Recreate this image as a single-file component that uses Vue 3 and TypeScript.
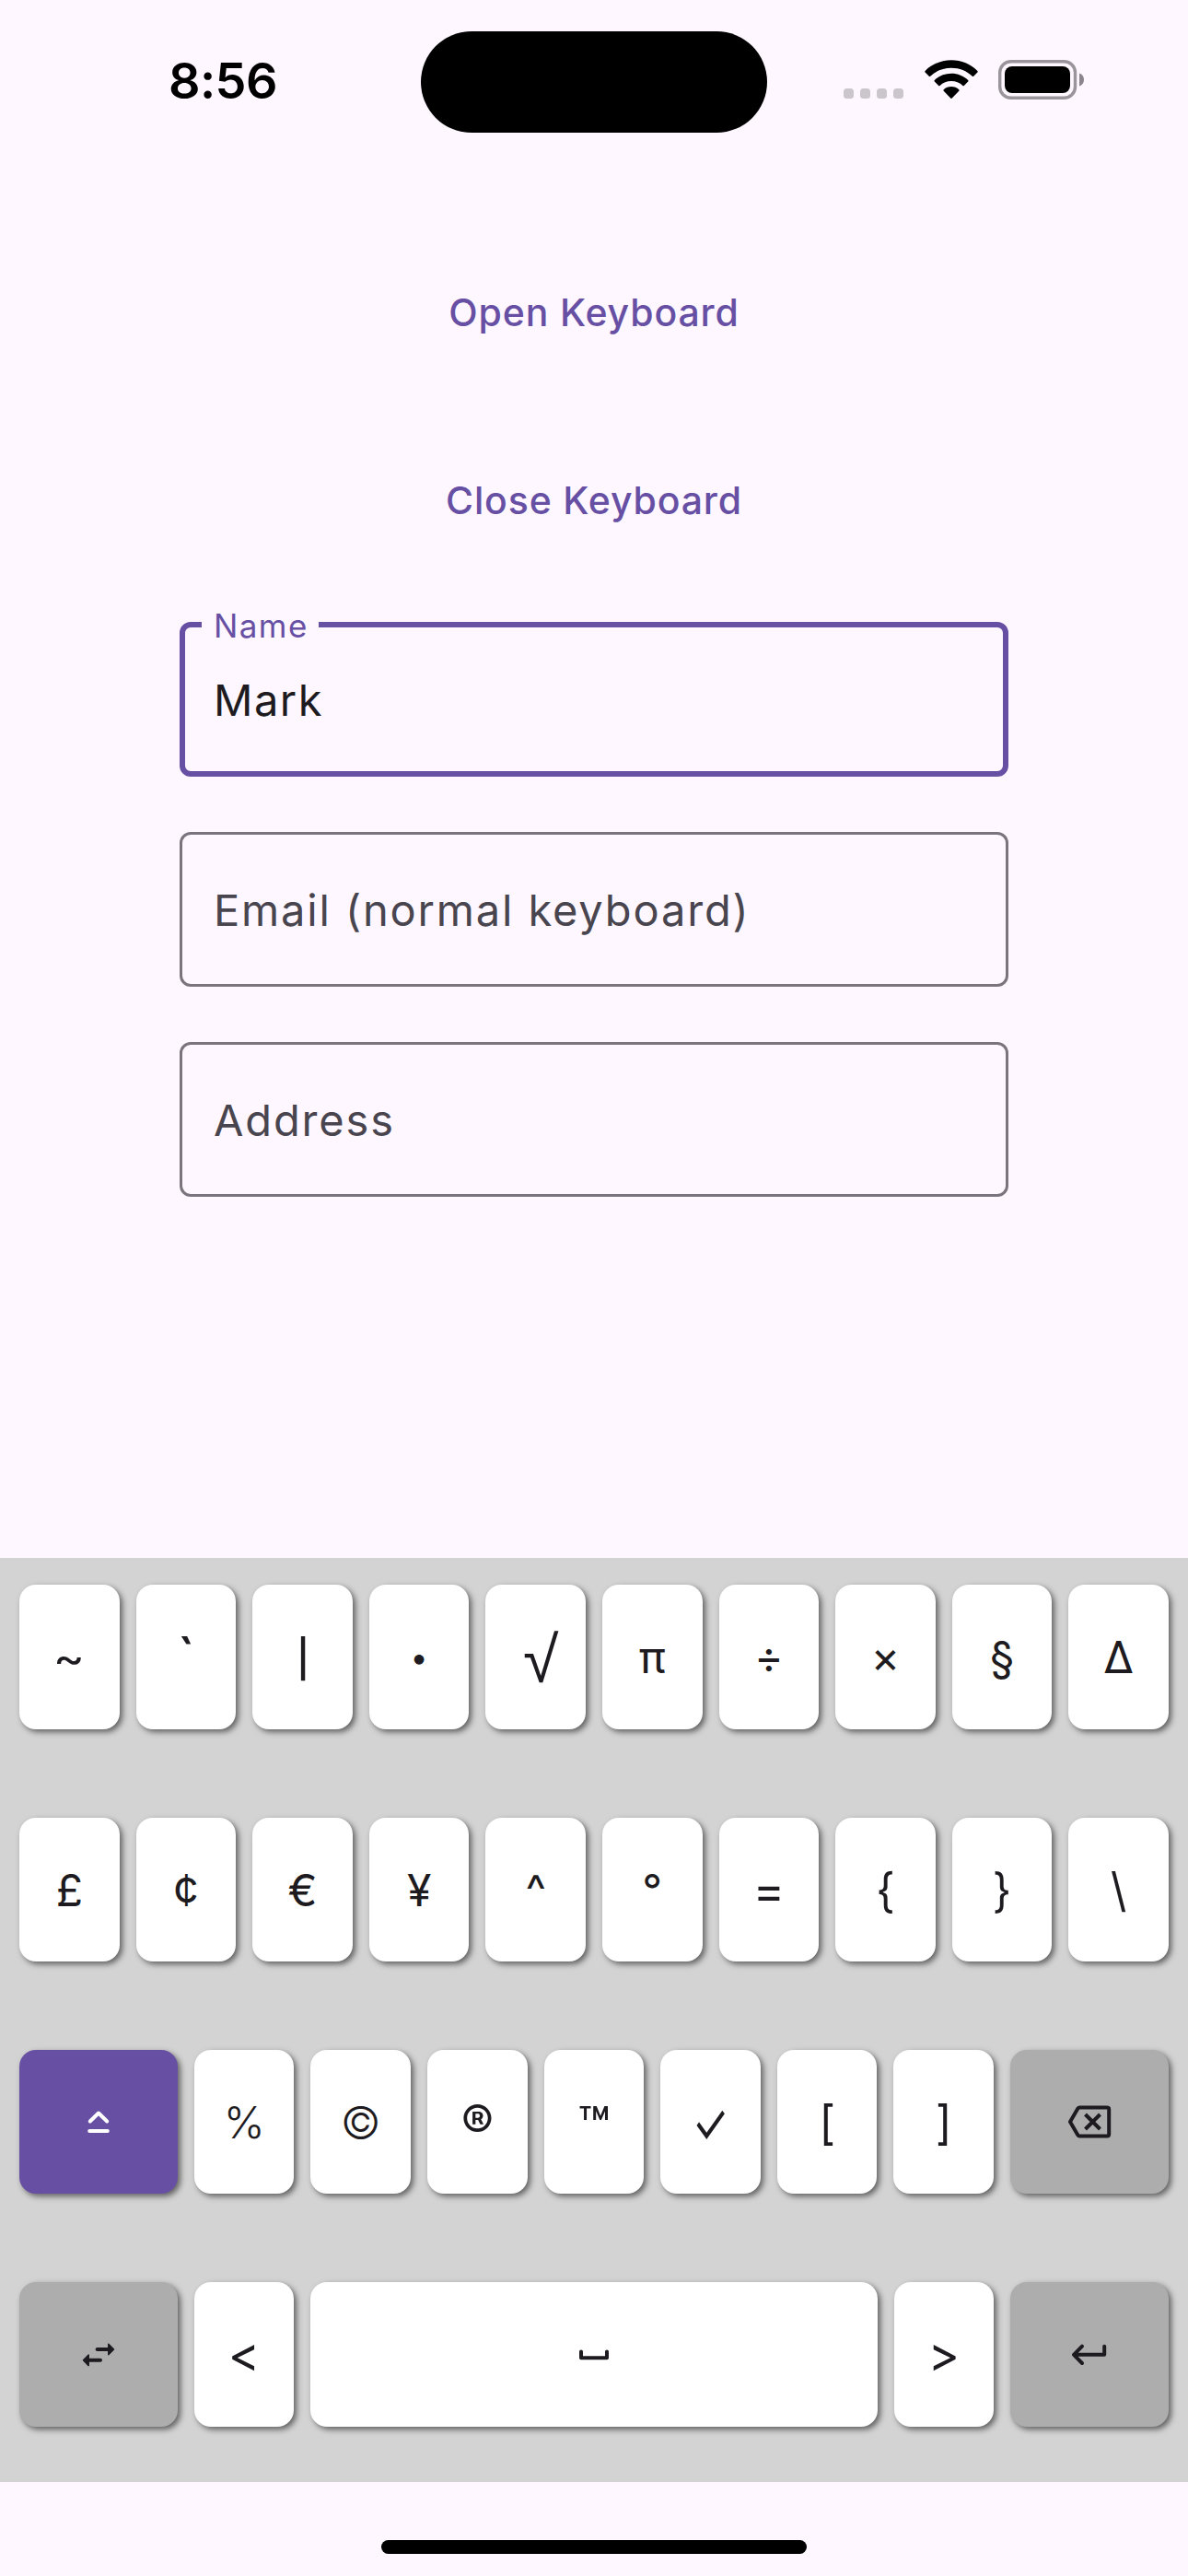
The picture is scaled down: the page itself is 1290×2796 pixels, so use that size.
<script setup lang="ts">
interface Key {
  label?: string
  icon?: 'shift' | 'backspace' | 'swap' | 'space' | 'enter'
  span?: number
  tone?: 'primary' | 'muted'
}

const chars = (list: string): Key[] => list.split(' ').map((label) => ({ label }))

const rows: Key[][] = [
  chars('~ ` | • √ π ÷ × § ∆'),
  chars('£ ¢ € ¥ ^ ° = { } \\'),
  [
    { icon: 'shift', span: 3, tone: 'primary' },
    ...chars('% © ® ™ ✓ [ ]'),
    { icon: 'backspace', span: 3, tone: 'muted' },
  ],
  [
    { icon: 'swap', span: 3, tone: 'muted' },
    { label: '<' },
    { icon: 'space', span: 10 },
    { label: '>' },
    { icon: 'enter', span: 3, tone: 'muted' },
  ],
]

const adjustments: Record<string, string> = {
  '~': 'tilde',
  '`': 'grave',
  '|': 'pipe',
  '•': 'bullet',
  '√': 'root',
  '%': 'light',
  '©': 'copyright',
  '®': 'registered',
  '™': 'trademark',
  '✓': 'check',
  '=': 'equals',
  '{': 'tall',
  '}': 'tall',
  '[': 'tall',
  ']': 'tall',
  '\\': 'tall',
  '<': 'angle',
  '>': 'angle',
}
</script>

<template>
  <div class="screen">
    <header class="status">
      <div class="time">8:56</div>
      <div class="island"></div>
      <div class="indicators">
        <div class="signal"><i></i><i></i><i></i><i></i></div>
        <svg class="wifi" width="58" height="43" viewBox="0 0 58 43">
          <path d="M29 0.2C40 0.2 50 4.6 57.4 11.9c.5.5.5 1.1 0 1.600L53.200 17.700c-.4.4-1 .4-1.400 0C45.800 11.900 37.800 8.700 29 8.700S12.200 11.900 6.200 17.700c-.4.4-1 .4-1.400 0L.6 13.500c-.5-.5-.5-1.100 0-1.600C8 4.600 18 .2 29 .2z" />
          <path d="M29 14.700c7 0 13.400 2.700 18.200 7.200.5.5.5 1.100 0 1.600l-4.400 4.400c-.4.4-1 .4-1.400 0C38.100 24.900 33.800 23 29 23s-9.100 1.900-12.400 4.900c-.4.4-1 .4-1.400 0l-4.400-4.400c-.5-.5-.5-1.100 0-1.600C15.600 17.400 22 14.700 29 14.700z" />
          <path d="M29 29c3.200 0 6.100 1.200 8.300 3.200.5.5.5 1.100 0 1.600l-7.500 7.700c-.5.5-1.100.5-1.600 0l-7.500-7.700c-.5-.5-.5-1.100 0-1.600C22.900 30.200 25.800 29 29 29z" />
        </svg>
        <svg class="battery" width="94" height="43" viewBox="0 0 94 43">
          <rect x="1.700" y="1.700" width="81.800" height="39.600" rx="12" fill="none" stroke="#9a959b" stroke-width="3.400" />
          <rect x="7" y="7" width="71" height="29" rx="8" />
          <path d="M88 14.500c3 .9 5 3.600 5 7s-2 6.100-5 7z" fill="#8b868c" />
        </svg>
      </div>
    </header>

    <main class="content">
      <button class="action">Open Keyboard</button>
      <button class="action">Close Keyboard</button>
      <div class="field active">
        <span class="caption">Name</span>
        <span class="value">Mark</span>
      </div>
      <div class="field">Email (normal keyboard)</div>
      <div class="field">Address</div>
    </main>

    <section class="keyboard">
      <div v-for="(row, r) in rows" :key="r" class="row">
        <div
          v-for="(key, k) in row"
          :key="k"
          class="key"
          :class="key.tone"
          :style="{ gridColumn: `span ${key.span ?? 2}` }"
        >
          <span v-if="key.label" class="glyph" :class="adjustments[key.label]">{{ key.label }}</span>
          <svg v-else class="icon" width="48" height="48" viewBox="0 0 48 48">
            <path v-if="key.icon === 'shift'" d="M14.800 23.500 24 14.500l9.200 9M14.200 33.900h19.600" />
            <template v-else-if="key.icon === 'backspace'">
              <path d="M13.400 8.400H43.200a2 2 0 0 1 2 2V37.600a2 2 0 0 1-2 2H13.400a2.500 2.500 0 0 1-2-1.100L3 24 11.400 9.500a2.500 2.500 0 0 1 2-1.100z" />
              <path class="butt" d="M19.500 16 35.500 32M35.500 16 19.500 32" />
            </template>
            <template v-else-if="key.icon === 'swap'">
              <path d="M22.600 18H36M26 29.800H12" />
              <path class="solid" d="M34.800 12.200v11.600L40.500 18zM13.200 24v11.600L7.500 29.800z" />
            </template>
            <path v-else-if="key.icon === 'space'" d="M10 20.500v6.800h28v-6.800" />
            <path v-else d="M16 14.600 7 23.800 16 33M7 23.800H40.200v-9" />
          </svg>
        </div>
      </div>
    </section>

    <footer class="home"><div class="bar"></div></footer>
  </div>
</template>

<style>
body {
  background: #fef7ff;
}
</style>

<style scoped>
.screen {
  width: 1290px;
  height: 2796px;
  display: flex;
  flex-direction: column;
  overflow: hidden;
  background: #fef7ff;
  font-family: Inter, 'Liberation Sans', sans-serif;
}

.status {
  height: 177px;
  display: grid;
  grid-template-columns: 457px 376px 457px;
  align-items: start;
}

.time {
  padding: 57px 0 0 183px;
  font-size: 54px;
  line-height: 62px;
  font-weight: 600;
  letter-spacing: -0.6px;
}

.island {
  height: 110.600px;
  margin-top: 33.600px;
  border-radius: 56px;
  background: #000;
}

.indicators {
  display: flex;
  align-items: flex-start;
  padding: 65px 0 0 83px;
}

.signal {
  display: flex;
  gap: 7px;
  padding-top: 31px;
  width: 87.500px;
}

.signal i {
  width: 11px;
  height: 11px;
  border-radius: 3.500px;
  background: #cbc6cc;
}

.battery {
  margin-left: 22.500px;
}

.content {
  height: 1513.500px;
  display: flex;
  flex-direction: column;
  align-items: center;
  padding-top: 90px;
  box-sizing: border-box;
}

.action {
  height: 144px;
  margin: 0 0 60px;
  padding: 0 36px;
  border: 0;
  background: none;
  color: #6750a4;
  font: 500 41px/144px Inter, sans-serif;
  letter-spacing: 0.850px;
}

.field {
  width: 900px;
  height: 168px;
  margin-bottom: 60px;
  padding: 0 34px;
  box-sizing: border-box;
  display: flex;
  align-items: center;
  position: relative;
  border: 3px solid #79747e;
  border-radius: 12px;
  color: #49454f;
  font-size: 47px;
  font-weight: 400;
  letter-spacing: 1.850px;
}

.field.active {
  padding: 0 31px;
  border: 6px solid #6750a4;
  color: #1d1b20;
  letter-spacing: 1.500px;
}

.caption {
  position: absolute;
  left: 18px;
  top: -23px;
  width: 127px;
  padding-left: 13px;
  box-sizing: border-box;
  background: #fef7ff;
  color: #6750a4;
  font-size: 35px;
  line-height: 42px;
  letter-spacing: 1.400px;
}

.keyboard {
  height: 1003.500px;
  padding: 29.800px 12px 0;
  box-sizing: border-box;
  display: flex;
  flex-direction: column;
  gap: 96px;
  background: #d3d3d3;
}

.row {
  height: 156.400px;
  display: grid;
  grid-template-columns: repeat(20, 1fr);
}

.key {
  margin: 0 9px;
  display: flex;
  align-items: center;
  justify-content: center;
  border-radius: 18px;
  background: #fff;
  color: #1d1b20;
  box-shadow: 3px 3px 6px #616161;
}

.key.muted {
  background: #adadad;
}

.key.primary {
  background: #6750a4;
  color: #fff;
}

.glyph {
  padding-top: 2px;
  font-size: 48px;
  line-height: 58px;
}

.tilde {
  transform: scaleX(1.080);
}

.grave {
  font-weight: 500;
  transform: scale(1.200);
}

.pipe {
  transform: translateY(2px) scale(1.200, 0.840);
}

.bullet {
  font-size: 34px;
}

.root {
  font-family: 'Liberation Sans', sans-serif;
  font-size: 52px;
  transform: translate(6px, 2px) scale(1.350);
}

.light {
  font-weight: 300;
}

.copyright {
  font-weight: 300;
}

.registered {
  font-weight: 500;
  font-size: 53px;
}

.trademark {
  font-weight: 500;
  font-size: 57px;
  transform: translateY(4px);
}

.check {
  transform: translateY(1px) scale(0.920, 1.300);
}

.equals {
  transform: scale(1.080);
}

.tall {
  transform: scaleY(1.060);
}

.angle {
  transform: translateY(-2px) scale(1.080, 1.120);
}

.icon {
  overflow: visible;
  fill: none;
  stroke: currentColor;
  stroke-width: 4px;
  stroke-linecap: round;
  stroke-linejoin: round;
}

.icon .butt {
  stroke-linecap: butt;
}

.icon .solid {
  fill: currentColor;
  stroke-width: 1.500px;
}

.home {
  flex: 1;
  display: flex;
  justify-content: center;
  align-items: flex-start;
  padding-top: 62.500px;
}

.bar {
  width: 462px;
  height: 15px;
  border-radius: 8px;
  background: #000;
}
</style>
